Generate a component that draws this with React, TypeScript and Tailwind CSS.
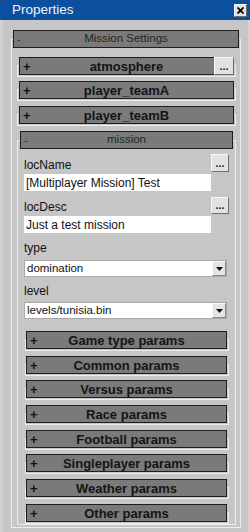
import React from "react";

function Dots({ className = "" }: { className?: string }) {
  return (
    <div
      className={`flex items-end justify-center bg-[#e2e2e2] border border-t-[#f8f8f8] border-l-[#f8f8f8] border-b-[#6f6f6f] border-r-[#6f6f6f] text-[11px] font-bold leading-[11px] text-[#222] pb-[2px] ${className}`}
    >
      ...
    </div>
  );
}

function Header({
  sign,
  label,
  bold,
  button,
  className = "",
}: {
  sign: string;
  label: string;
  bold?: boolean;
  button?: boolean;
  className?: string;
}) {
  return (
    <div
      className={`grid grid-cols-[22px_1fr_22px] items-center h-[18px] bg-[#7a7a7a] border border-[#1e1e1e] ${className}`}
    >
      <span
        className={`pl-[3px] leading-none ${
          bold ? "text-[13px] font-bold text-[#111]" : "text-[11px] text-[#333]"
        }`}
      >
        {sign}
      </span>
      <span
        className={`text-center whitespace-nowrap leading-none ${
          bold ? "text-[13px] font-bold text-[#141414]" : "text-[11.5px] text-[#262626]"
        }`}
      >
        {label}
      </span>
      {button ? (
        <Dots className="justify-self-end w-[20px] h-[18px] -my-[1px] -mr-[1px]" />
      ) : (
        <span />
      )}
    </div>
  );
}

function Collapsed({
  label,
  button,
  className = "",
  headerClass = "",
}: {
  label: string;
  button?: boolean;
  className?: string;
  headerClass?: string;
}) {
  return (
    <div className={`flex flex-col ${className}`}>
      <div className="mt-[8px] h-[12px] border border-[#ececec]" />
      <Header sign="+" label={label} bold button={button} className={`-mt-[20px] ${headerClass}`} />
    </div>
  );
}

function Select({ value, className = "" }: { value: string; className?: string }) {
  return (
    <div
      className={`flex items-center h-[17px] bg-white border border-[#a9a9a9] mr-[2px] ${className}`}
    >
      <span className="flex-1 pl-[2px] text-[11.5px] leading-none text-[#111]">{value}</span>
      <div className="flex items-center justify-center w-[14px] h-[15px] bg-[#e4e4e4] border border-t-[#fafafa] border-l-[#fafafa] border-b-[#8a8a8a] border-r-[#8a8a8a]">
        <svg width="7" height="4" viewBox="0 0 7 4">
          <path d="M0 0h7L3.5 4z" fill="#111" />
        </svg>
      </div>
    </div>
  );
}

const params = [
  ["Game type params", "mt-[12px]"],
  ["Common params", "mt-[7px]"],
  ["Versus params", "mt-[6px]"],
  ["Race params", "mt-[7px]"],
  ["Football params", "mt-[7px]"],
  ["Singleplayer params", "mt-[6px]"],
  ["Weather params", "mt-[7px]"],
  ["Other params", "mt-[7px]"],
];

export default function App() {
  return (
    <div className="w-[250px] h-[532px] overflow-hidden flex flex-col bg-[#c6c6c6] font-['Liberation_Sans',Arial,sans-serif]">
      {/* Title bar */}
      <div className="h-[20px] shrink-0 flex items-center justify-between pl-[12px] pr-[3px] bg-[#0d4f9f]">
        <span className="text-[13.5px] leading-none text-[#eef3fb]">Properties</span>
        <div className="flex items-center justify-center w-[13px] h-[13px] bg-[#e2e2e2] border border-t-[#fafafa] border-l-[#fafafa] border-b-[#707070] border-r-[#707070]">
          <svg width="7" height="7" viewBox="0 0 7 7">
            <path d="M0.5 0.5l6 6M6.5 0.5l-6 6" stroke="#000" strokeWidth="1.8" />
          </svg>
        </div>
      </div>

      {/* Body */}
      <div className="flex-1 flex flex-col pt-[19px] pl-[8px] pr-[7px] border-l-[3px] border-r-[2px] border-[#d2d2d2]">
        <div className="flex flex-col border border-[#ececec] pb-[2px]">
          <Header sign="-" label="Mission Settings" className="-mt-[10px] mx-[1px]" />

          <div className="flex flex-col pl-[5px] pr-[4px]">
            <Collapsed label="atmosphere" button className="mt-[9px]" headerClass="mx-[2px]" />
            <Collapsed label="player_teamA" className="mt-[6px]" headerClass="mx-[2px]" />
            <Collapsed label="player_teamB" className="mt-[7px]" headerClass="mx-[2px]" />

            {/* mission */}
            <div className="flex flex-col mt-[7px]">
              <div className="mt-[9px] flex flex-col border border-[#ececec] pb-[2px]">
                <Header sign="-" label="mission" className="-mt-[10px] mx-[2px]" />

                <div className="flex flex-col pl-[6px] pr-[6px] text-[12px] text-[#111]">
                  <div className="mt-[5px] h-[18px] flex items-end justify-between">
                    <span className="leading-[14px]">locName</span>
                    <Dots className="w-[18px] h-[18px]" />
                  </div>
                  <div className="mt-[2px] mr-[18px] h-[17px] flex items-center bg-white pl-[2px] leading-none">
                    [Multiplayer Mission] Test
                  </div>

                  <div className="mt-[6px] h-[17px] flex items-end justify-between">
                    <span className="leading-[14px]">locDesc</span>
                    <Dots className="w-[18px] h-[17px]" />
                  </div>
                  <div className="mt-[2px] mr-[18px] h-[17px] flex items-center bg-white pl-[2px] leading-none">
                    Just a test mission
                  </div>

                  <span className="mt-[8px] leading-[14px]">type</span>
                  <Select value="domination" className="mt-[5px]" />

                  <span className="mt-[7px] leading-[14px]">level</span>
                  <Select value="levels/tunisia.bin" className="mt-[4px]" />

                  {params.map(([label, mt]) => (
                    <Collapsed key={label} label={label} className={`ml-[1px] ${mt}`} headerClass="ml-[1px] mr-[2px]" />
                  ))}
                </div>
              </div>
            </div>
          </div>
        </div>
      </div>
    </div>
  );
}
